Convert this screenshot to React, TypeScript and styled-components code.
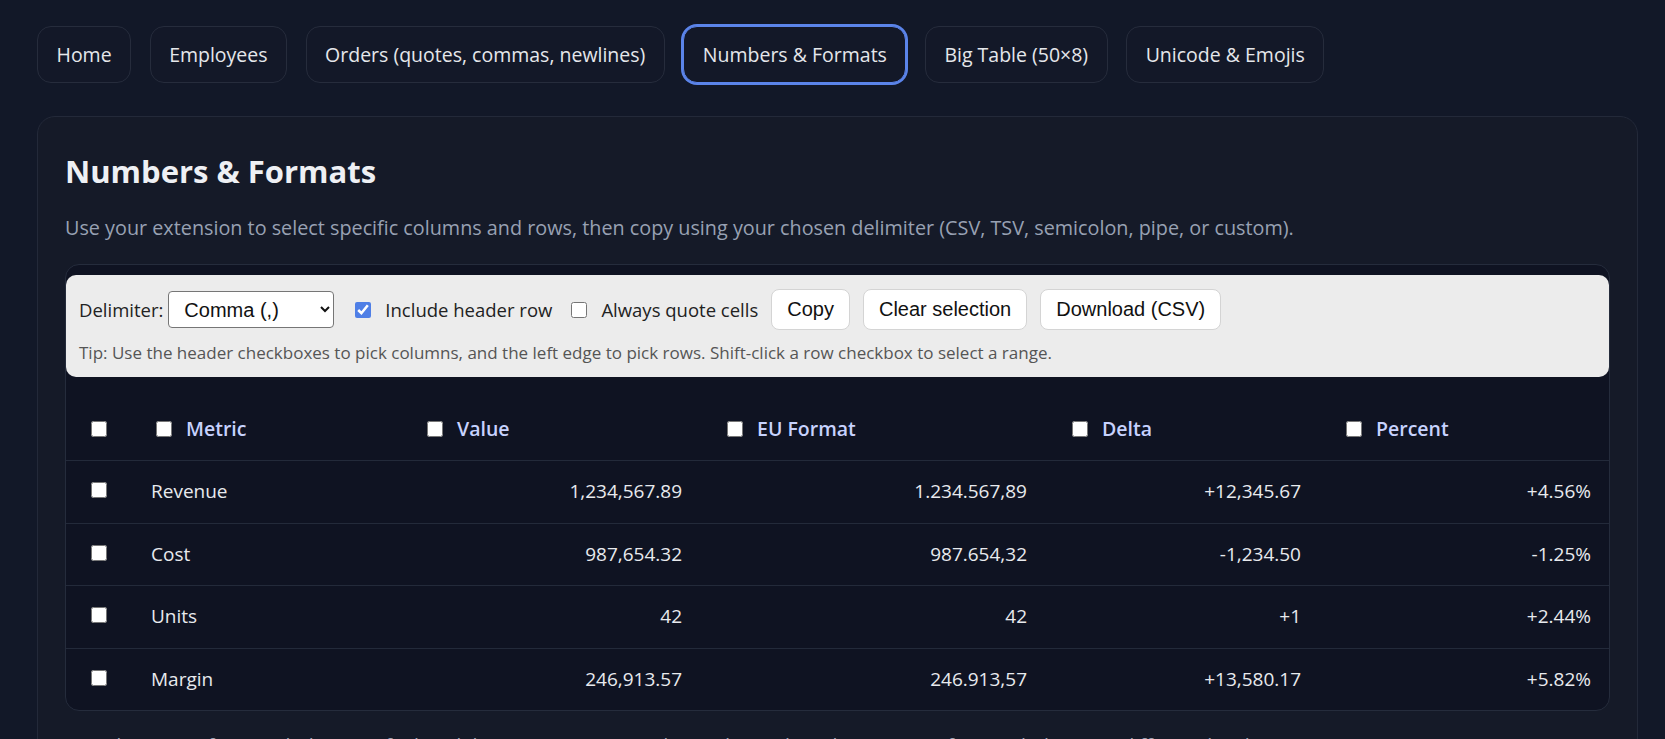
import React from "react";
import styled, { createGlobalStyle } from "styled-components";

const Global = createGlobalStyle`
  html, body { margin: 0; padding: 0; background: #121828; }
  body { font-family: "Open Sans", "Noto Sans", sans-serif; color: #e5e7eb; }
  * { box-sizing: border-box; }
`;

const Page = styled.div`
  padding: 26px 27px 0 37px;
  min-height: 739px;
  overflow: hidden;
`;

const Tabs = styled.nav`
  display: flex;
  gap: 18.5px;
  align-items: center;
`;

const Tab = styled.button<{ $active?: boolean }>`
  height: 57px;
  padding: 0 18.5px;
  border-radius: 14px;
  background: #131828;
  border: 1px solid ${(p) => (p.$active ? "#5b84ea" : "#262c3c")};
  box-shadow: ${(p) => (p.$active ? "0 0 0 2px #5b84ea" : "none")};
  color: #e5e7eb;
  font-family: "Open Sans", "Noto Sans", sans-serif;
  font-size: 19.5px;
  cursor: pointer;
  white-space: nowrap;
`;

const Card = styled.section`
  margin-top: 33px;
  background: #151a28;
  border: 1px solid #232939;
  border-radius: 18px;
  padding: 35px 27px 20px;
`;

const Title = styled.h1`
  margin: 0;
  font-size: 31px;
  line-height: 38px;
  font-weight: 700;
  color: #eef0f4;
`;

const Desc = styled.p`
  margin: 24px 0 0;
  font-size: 19.8px;
  line-height: 28px;
  color: #98a1b3;
`;

const TableBox = styled.div`
  margin-top: 22px;
  border: 1px solid #252c3c;
  border-radius: 14px;
  background: #0f1322;
  overflow: hidden;
`;

const Toolbar = styled.div`
  margin-top: 10px;
  background: #ececec;
  border-radius: 10px;
  padding: 14px 13px 13px;
  color: #222;
`;

const ToolRow = styled.div`
  display: flex;
  align-items: center;
  gap: 13px;
`;

const Label = styled.label`
  display: flex;
  align-items: center;
  font-size: 18.5px;
  color: #222;
  white-space: nowrap;
`;

const Select = styled.select`
  margin-left: 5px;
  width: 166px;
  height: 37px;
  padding: 0 4px 0 11px;
  font-family: "Liberation Sans", Arial, sans-serif;
  font-size: 20px;
  color: #111;
  background: #fff;
  border: 1px solid #767676;
  border-radius: 4px;
`;

const Check = styled.input.attrs({ type: "checkbox" })<{ $lead?: number }>`
  width: 16px;
  height: 16px;
  margin: 0 14px 0 ${(p) => p.$lead ?? 5}px;
  accent-color: #4f7fe6;
  flex: none;
`;

const Btn = styled.button`
  height: 41px;
  padding: 0 15px;
  background: #fff;
  border: 1px solid #d4d4d4;
  border-radius: 8px;
  font-family: "Liberation Sans", Arial, sans-serif;
  font-size: 20px;
  color: #111;
  cursor: pointer;
`;

const Tip = styled.div`
  margin-top: 12px;
  font-size: 17px;
  line-height: 22px;
  color: #555;
`;

const Table = styled.table`
  width: 100%;
  border-collapse: collapse;
  table-layout: fixed;
`;

const Th = styled.th`
  padding: 37px 20px 15px;
  text-align: left;
  font-size: 19.5px;
  line-height: 30px;
  font-weight: 600;
  color: #c7d2fe;
  border-bottom: 1px solid #232a3a;
`;

const ThInner = styled.span`
  display: inline-flex;
  align-items: center;
`;

const Tr = styled.tr`
  &:not(:last-child) td { border-bottom: 1px solid #232a3a; }
`;

const Td = styled.td<{ $num?: boolean }>`
  padding: 15px 20px;
  font-size: 19px;
  line-height: 31.5px;
  color: #e8eaee;
  text-align: ${(p) => (p.$num ? "right" : "left")};
  white-space: nowrap;
`;

const Foot = styled.p`
  margin: 21px 0 0;
  font-size: 19.8px;
  line-height: 28px;
  color: #98a1b3;
`;

const tabs = [
  "Home",
  "Employees",
  "Orders (quotes, commas, newlines)",
  "Numbers & Formats",
  "Big Table (50×8)",
  "Unicode & Emojis",
];

const cols = [
  { name: "Metric", w: 271 },
  { name: "Value", w: 300 },
  { name: "EU Format", w: 345 },
  { name: "Delta", w: 274 },
  { name: "Percent", w: 290 },
];

const rows = [
  ["Revenue", "1,234,567.89", "1.234.567,89", "+12,345.67", "+4.56%"],
  ["Cost", "987,654.32", "987.654,32", "-1,234.50", "-1.25%"],
  ["Units", "42", "42", "+1", "+2.44%"],
  ["Margin", "246,913.57", "246.913,57", "+13,580.17", "+5.82%"],
];

export default function App() {
  return (
    <Page>
      <Global />
      <Tabs>
        {tabs.map((t) => (
          <Tab key={t} $active={t === "Numbers & Formats"}>
            {t}
          </Tab>
        ))}
      </Tabs>
      <Card>
        <Title>Numbers &amp; Formats</Title>
        <Desc>
          Use your extension to select specific columns and rows, then copy using your chosen
          delimiter (CSV, TSV, semicolon, pipe, or custom).
        </Desc>
        <TableBox>
          <Toolbar>
            <ToolRow>
              <Label>
                Delimiter:
                <Select defaultValue="comma">
                  <option value="comma">Comma (,)</option>
                  <option value="tab">Tab</option>
                  <option value="semi">Semicolon (;)</option>
                  <option value="pipe">Pipe (|)</option>
                </Select>
              </Label>
              <Label>
                <Check $lead={8} defaultChecked />
                Include header row
              </Label>
              <Label>
                <Check $lead={6} />
                Always quote cells
              </Label>
              <Btn>Copy</Btn>
              <Btn>Clear selection</Btn>
              <Btn>Download (CSV)</Btn>
            </ToolRow>
            <Tip>
              Tip: Use the header checkboxes to pick columns, and the left edge to pick rows.
              Shift-click a row checkbox to select a range.
            </Tip>
          </Toolbar>
          <Table>
            <colgroup>
              <col style={{ width: 65 }} />
              {cols.map((c) => (
                <col key={c.name} style={{ width: c.w }} />
              ))}
            </colgroup>
            <thead>
              <tr>
                <Th>
                  <ThInner>
                    <Check />
                  </ThInner>
                </Th>
                {cols.map((c) => (
                  <Th key={c.name}>
                    <ThInner>
                      <Check />
                      {c.name}
                    </ThInner>
                  </Th>
                ))}
              </tr>
            </thead>
            <tbody>
              {rows.map((r) => (
                <Tr key={r[0]}>
                  <Td>
                    <ThInner>
                      <Check />
                    </ThInner>
                  </Td>
                  {r.map((v, i) => (
                    <Td key={i} $num={i > 0}>
                      {v}
                    </Td>
                  ))}
                </Tr>
              ))}
            </tbody>
          </Table>
        </TableBox>
        <Foot>
          Mixed numeric formats below: verify that delimiters, quoting, and sign/decimal markers
          survive for Excel/Sheets in different locales.
        </Foot>
      </Card>
    </Page>
  );
}
